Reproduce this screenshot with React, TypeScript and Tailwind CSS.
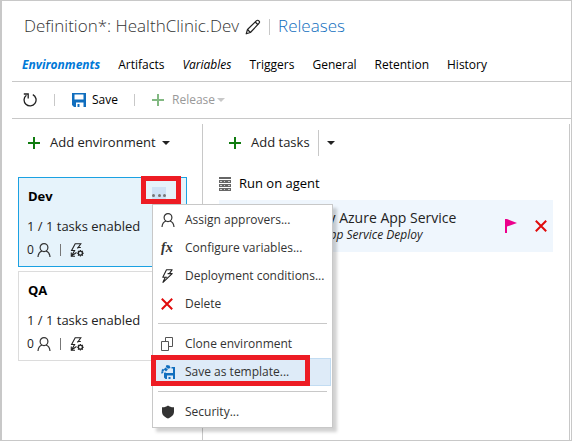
import type { ReactNode } from "react";

const tabs = ["Artifacts", "Variables", "Triggers", "General", "Retention", "History"];

function Plus({ color }: { color: string }) {
  return (
    <svg className="h-3 w-3 shrink-0" viewBox="0 0 12 12" fill={color} aria-hidden="true">
      <path d="M5 0h2v5h5v2H7v5H5V7H0V5h5z" />
    </svg>
  );
}

function Caret({ color }: { color: string }) {
  return (
    <svg className="h-1 w-2 shrink-0" viewBox="0 0 8 4" fill={color} aria-hidden="true">
      <path d="M0 0h8L4 4z" />
    </svg>
  );
}

function Person() {
  return (
    <svg className="h-3.5 w-3.5 shrink-0" viewBox="0 0 14 14" fill="none" stroke="#333" strokeWidth="1.2" aria-hidden="true">
      <ellipse cx="7" cy="4.6" rx="3.9" ry="4" />
      <path d="M1 14c.2-3 1.7-5.2 4-6M13 14c-.2-3-1.7-5.2-4-6" />
    </svg>
  );
}

function Bolt() {
  return (
    <svg className="h-3.5 w-3.5 shrink-0" viewBox="0 0 14 14" fill="none" stroke="#222" strokeWidth="1.1" strokeLinejoin="round" aria-hidden="true">
      <path d="M5.5.7h5.700L8.300 4.600h2.900L2 13.300l2.300-5.100H1.800z" />
      <path d="M8.300 4.600H6.600M4.300 8.200h2" />
    </svg>
  );
}

function BoltGear() {
  return (
    <svg className="h-3.5 w-3.5 shrink-0" viewBox="0 0 14 14" fill="none" stroke="#222" strokeWidth="1.1" aria-hidden="true">
      <path d="M7.500 5.500 10.800.7H5.200L1.600 7.500h3L1.500 13l5-3.500M7.300 4.500h3.500" />
      <path d="M1.300 9.500v3.700H5" />
      <circle cx="10.400" cy="10.200" r="2" strokeWidth="1.300" />
      <path
        d="M10.400 6.900v1.300M10.400 12.200v1.400M7.100 10.200h1.300M12.500 10.200h1.300M8 7.800l1 1M11.800 11.600l1 1M12.800 7.800l-1 1M9 11.600l-1 1"
      />
    </svg>
  );
}

function Cross() {
  return (
    <svg className="h-3 w-3 shrink-0" viewBox="0 0 12 12" stroke="#e00b0b" strokeWidth="2" aria-hidden="true">
      <path d="M.8.8l10.400 10.400M11.200.8.8 11.200" />
    </svg>
  );
}

function Pencil() {
  return (
    <svg className="h-4 w-4" viewBox="0 0 16 16" fill="none" stroke="#222" strokeWidth="1.200" strokeLinejoin="round" aria-hidden="true">
      <path d="M1.200 14.800l1.300-4.300L11.300 1.900c.9-.9 1.900-.8 2.600-.1s.8 1.800 0 2.600L5.400 13.500z" />
      <path d="M10.200 3l2.800 2.700M2.500 10.500l2.900 3" />
    </svg>
  );
}

function Refresh() {
  return (
    <svg className="h-3.5 w-3.5" viewBox="0 0 14 14" fill="none" stroke="#222" strokeWidth="1.3" aria-hidden="true">
      <path d="M9.800 1.600A6 6 0 1 1 3.400 2.200" />
      <path d="M.8 1h4.400v4.400" />
    </svg>
  );
}

function Floppy() {
  return (
    <svg className="h-3.5 w-3.5" viewBox="0 0 14 14" fill="#106ebe" aria-hidden="true">
      <path fillRule="evenodd" d="M0 0h14v14h-2.500V9.500H4V14H2L0 12zM2.500 1.500v5h9v-5z" />
      <path d="M5.500 11h2v3h-2z" />
    </svg>
  );
}

function TemplateSave() {
  return (
    <svg className="h-3.5 w-3.5" viewBox="0 0 14 14" fill="#106ebe" aria-hidden="true">
      <path d="M10.500 2H14v12h-2v-3.500H6V14H4.500L3 12.500V8l1.500-1V8H12V3.500h-1.500z" />
      <path d="M7.500 12h2v2h-2zM5.500 0l3 .4L9.500 3 7 3.800 4.800 2zM4.500 2.600l2.400 1.800-1.900 2L2.800 4.200zM1.800 3.800l1.700 1.300-1.800 1.700L.4 5.200zM0 6.500l3 .3L.8 9z" />
    </svg>
  );
}

function Clone() {
  return (
    <svg className="h-3.5 w-3.5" viewBox="0 0 14 14" fill="none" stroke="#555" aria-hidden="true">
      <path d="M.5 4.500h7v9h-7zM4.500 4.500v-4h7v9h-4" />
    </svg>
  );
}

function Shield() {
  return (
    <svg className="h-3.5 w-3.5" viewBox="0 0 14 14" fill="#333" aria-hidden="true">
      <path d="M7 .5c1.500 1.300 3.500 1.900 6 1.800v4.400c0 3-2.500 5.500-6 6.800-3.500-1.300-6-3.800-6-6.800V2.300c2.500.1 4.500-.5 6-1.800z" />
    </svg>
  );
}

function Server() {
  return (
    <svg className="h-3.5 w-3" viewBox="0 0 12 14" fill="#666" aria-hidden="true">
      <path d="M0 0h12v2H0zM0 3h12v3H0zM0 7h12v3H0zM0 11h12v3H0z" />
      <path fill="#ccc" d="M1 4h2v1H1zM5 4h1v1H5zM9 4h2v1H9zM1 8h2v1H1zM5 8h1v1H5zM9 8h2v1H9zM1 12h2v1H1zM5 12h1v1H5zM9 12h2v1H9z" />
    </svg>
  );
}

function Flag() {
  return (
    <svg className="h-3.5 w-3" viewBox="0 0 12 14" fill="#ec008c" aria-hidden="true">
      <path d="M0 0h2l10 4L2 7.500V14H0z" />
    </svg>
  );
}

function MenuItem({ icon, label, active = false }: { icon: ReactNode; label: string; active?: boolean }) {
  return (
    <button
      role="menuitem"
      className={`relative flex h-7 w-full items-center border pl-1.5 text-left ${active ? "border-[#c2dcf2] bg-[#deebf8]" : "border-transparent"}`}
    >
      <span className="flex w-6 shrink-0 items-center">{icon}</span>
      <span className="whitespace-nowrap">{label}</span>
      {active && <span className="absolute -top-1 -left-1 h-[31px] w-[159px] border-5 border-[#ed1c24]" />}
    </button>
  );
}

function Separator() {
  return <div role="separator" className="mx-1 mt-[5px] mb-1.5 h-px bg-[#c8c8c8]" />;
}

function EnvironmentMenu() {
  return (
    <div
      role="menu"
      className="absolute top-full left-2.5 z-10 w-[181px] border border-[#c8c8c8] bg-white p-px text-xs text-[#333] shadow-[4px_4px_3px_#0000002e]"
    >
      <MenuItem icon={<Person />} label="Assign approvers..." />
      <MenuItem
        icon={<span className="font-['Liberation_Serif',serif] text-sm font-bold italic">fx</span>}
        label="Configure variables..."
      />
      <MenuItem icon={<Bolt />} label="Deployment conditions..." />
      <MenuItem icon={<Cross />} label="Delete" />
      <Separator />
      <MenuItem icon={<Clone />} label="Clone environment" />
      <MenuItem icon={<TemplateSave />} label="Save as template..." active />
      <Separator />
      <MenuItem icon={<Shield />} label="Security..." />
    </div>
  );
}

function EnvironmentCard({ name, selected = false }: { name: string; selected?: boolean }) {
  return (
    <section
      className={`relative h-[90px] border pt-2 pl-2 text-[#222] ${selected ? "border-[#1ba1e2] bg-[#e6f3fb]" : "border-[#dcdcdc] bg-white"}`}
    >
      <h2 className="pl-px text-[13px] leading-5 font-bold text-black">{name}</h2>
      <p className="mt-2.5 text-[13px] leading-5">1 / 1 tasks enabled</p>
      <div className="mt-1 flex h-5 items-center text-xs">
        <span className="w-2.5">0</span>
        <Person />
        <span className="mx-[9px] h-3 w-px bg-[#777]" />
        <BoltGear />
      </div>
      {selected && (
        <div className="absolute -top-0.5 right-[5px] h-7 w-10 border-5 border-[#ed1c24]">
          <button aria-label="Dev actions" className="mt-1.5 ml-1.5 flex h-3 w-3.5 items-end justify-between bg-[#cfe2f5] pb-0.5">
            <span className="h-[3px] w-[3px] rounded-full bg-[#777]" />
            <span className="h-[3px] w-[3px] rounded-full bg-[#777]" />
            <span className="h-[3px] w-[3px] rounded-full bg-[#777]" />
          </button>
        </div>
      )}
    </section>
  );
}

export default function App() {
  return (
    <div className="flex min-h-screen flex-col border border-l-2 border-[#c8c8c8] bg-white pl-2.5 font-['Open_Sans','Noto_Sans',sans-serif] text-xs whitespace-nowrap text-black">
      <header className="flex h-[51px] items-center pl-3 text-[17px] font-light text-[#333]">
        <h1>Definition*: HealthClinic.Dev</h1>
        <button aria-label="Rename definition" className="ml-1.5">
          <Pencil />
        </button>
        <span className="mx-2 h-4 w-px bg-[#c8c8c8]" />
        <a href="#releases" className="text-[#106ebe]">
          Releases
        </a>
      </header>

      <nav className="flex h-[30px] items-center gap-[18px] border-b border-[#c8c8c8] pb-1 pl-2.5">
        <a href="#environments" className="font-bold text-[#0078d7] italic">
          Environments
        </a>
        {tabs.map((tab) => (
          <a key={tab} href={`#${tab.toLowerCase()}`} className={tab === "Variables" ? "italic" : ""}>
            {tab}
          </a>
        ))}
      </nav>

      <div className="flex h-[37px] items-center border-b border-[#c8c8c8] pl-[11px]">
        <button aria-label="Refresh">
          <Refresh />
        </button>
        <span className="mx-[17px] h-3 w-px bg-[#c8c8c8]" />
        <button className="flex items-center gap-1.5">
          <Floppy />
          Save
        </button>
        <span className="mr-[17px] ml-4 h-3 w-px bg-[#c8c8c8]" />
        <button disabled className="flex items-center text-[#999]">
          <Plus color="#82b982" />
          <span className="mr-0.5 ml-2">Release</span>
          <Caret color="#c8c8c8" />
        </button>
      </div>

      <main className="flex flex-1 pt-[5px]">
        <aside className="w-[190px] shrink-0 px-1.5">
          <button className="flex h-[38px] items-center pl-2.5 text-[13px] text-[#222]">
            <Plus color="#107c10" />
            <span className="mr-1.5 ml-2.5">Add environment</span>
            <Caret color="#222" />
          </button>
          <div className="relative mt-[15px] flex w-[169px] flex-col gap-1">
            <EnvironmentCard name="Dev" selected />
            <EnvironmentCard name="QA" />
            <div className="absolute top-0 left-[124px] h-[27px]">
              <EnvironmentMenu />
            </div>
          </div>
        </aside>

        <section className="mr-px min-w-0 flex-1 border-x border-[#c8c8c8] pl-4 text-[13px] text-[#222]">
          <div className="flex h-[38px] items-center pl-2.5">
            <button className="flex items-center gap-2.5">
              <Plus color="#107c10" />
              Add tasks
            </button>
            <span className="ml-2 h-[26px] w-px bg-[#c8c8c8]" />
            <button aria-label="More task options" className="ml-2">
              <Caret color="#222" />
            </button>
          </div>
          <div className="mt-3 flex h-5 items-center gap-2 text-black">
            <Server />
            Run on agent
          </div>
          <div className="mt-1.5 mr-4 flex h-[52px] items-center bg-[#eff6fd] pl-[71px]">
            <div>
              <p className="text-sm leading-4">Deploy Azure App Service</p>
              <p className="text-xs leading-[17px] italic">Azure App Service Deploy</p>
            </div>
            <span className="ml-auto">
              <Flag />
            </span>
            <button aria-label="Remove task" className="mr-1.5 ml-[18px]">
              <Cross />
            </button>
          </div>
        </section>
      </main>
    </div>
  );
}
